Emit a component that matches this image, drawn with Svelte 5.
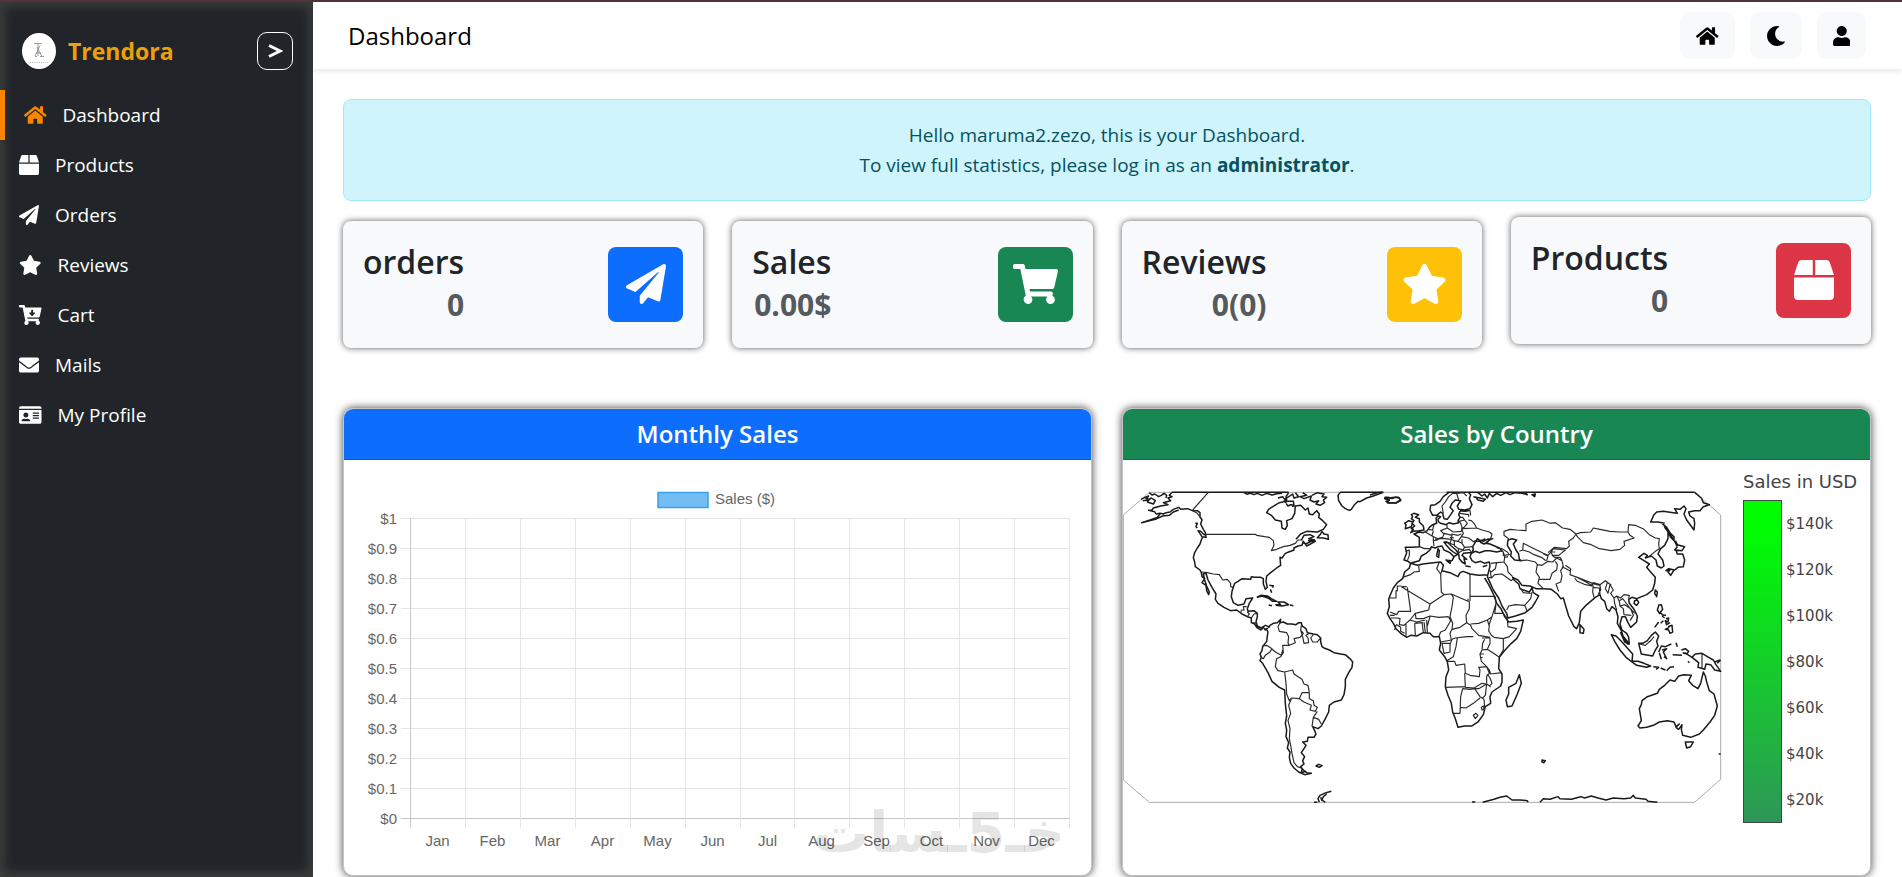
<script lang="ts">
	const cartBody =
		'M504.717 320H211.572l6.545 32h268.418c15.401 0 26.816 14.301 23.403 29.319l-5.517 24.276C523.112 414.668 536 433.828 536 456c0 31.202-25.519 56.444-56.824 55.994-29.823-.429-54.35-24.631-55.155-54.447-.44-16.287 6.085-31.049 16.803-41.548H231.176C241.553 426.165 248 440.326 248 456c0 31.813-26.528 57.431-58.67 55.938-28.54-1.325-51.751-24.385-53.251-52.917-1.158-22.034 10.436-41.455 28.051-51.586L93.883 64H24C10.745 64 0 53.255 0 40V24C0 10.745 10.745 0 24 0h102.529c11.401 0 21.228 8.021 23.513 19.19L159.208 64H551.99c15.401 0 26.816 14.301 23.403 29.319l-47.273 208C525.637 312.246 515.923 320 504.717 320z';

	// [viewBox width, path], every icon is 512 high
	const icons: Record<string, [number, string]> = {
		home: [576, 'M280.37 148.26L96 300.11V464a16 16 0 0 0 16 16l112.06-.29a16 16 0 0 0 15.92-16V368a16 16 0 0 1 16-16h64a16 16 0 0 1 16 16v95.64a16 16 0 0 0 16 16.05L464 480a16 16 0 0 0 16-16V300L295.67 148.26a12.19 12.19 0 0 0-15.3 0zM571.6 251.47L488 182.56V44.05a12 12 0 0 0-12-12h-56a12 12 0 0 0-12 12v72.61L318.47 43a48 48 0 0 0-61 0L4.34 251.47a12 12 0 0 0-1.6 16.9l25.5 31A12 12 0 0 0 45.15 301l235.22-193.74a12.19 12.19 0 0 1 15.3 0L530.9 301a12 12 0 0 0 16.9-1.6l25.5-31a12 12 0 0 0-1.7-16.93z'],
		box: [512, 'M509.5 184.6L458.9 32.8C452.4 13.2 434.1 0 413.4 0H272v192h238.7c-.4-2.5-.4-5-1.2-7.4zM240 0H98.6c-20.7 0-39 13.2-45.5 32.8L2.5 184.6c-.8 2.4-.8 4.9-1.2 7.4H240V0zM0 224v240c0 26.5 21.5 48 48 48h416c26.5 0 48-21.5 48-48V224H0z'],
		plane: [512, 'M476 3.2L12.5 270.6c-18.1 10.4-15.8 35.6 2.2 43.2L121 358.4l287.3-253.2c5.5-4.9 13.3 2.6 8.6 8.3L176 407v80.5c0 23.6 28.5 32.9 42.5 15.8L282 426l124.6 52.2c14.2 6 30.4-2.9 33-18.2l72-432C515 7.8 493.3-6.8 476 3.2z'],
		star: [576, 'M259.3 17.8L194 150.2 47.9 171.5c-26.2 3.8-36.7 36.1-17.7 54.6l105.7 103-25 145.5c-4.5 26.3 23.2 46 46.4 33.7L288 439.6l130.7 68.7c23.2 12.2 50.9-7.4 46.4-33.7l-25-145.5 105.7-103c19-18.5 8.5-50.8-17.7-54.6L382 150.2 316.7 17.8c-11.7-23.6-45.6-23.9-57.4 0z'],
		cart: [576, cartBody],
		cartDown: [576, cartBody + 'M403.029 192H360v-60c0-6.627-5.373-12-12-12h-24c-6.627 0-12 5.373-12 12v60h-43.029c-10.691 0-16.045 12.926-8.485 20.485l67.029 67.029c4.686 4.686 12.284 4.686 16.971 0l67.029-67.029c7.559-7.559 2.205-20.485-8.486-20.485z'],
		mail: [512, 'M502.3 190.8c3.9-3.1 9.7-.2 9.7 4.7V400c0 26.5-21.5 48-48 48H48c-26.5 0-48-21.5-48-48V195.6c0-5 5.7-7.8 9.7-4.7 22.4 17.4 52.1 39.5 154.1 113.6 21.1 15.4 56.7 47.8 92.2 47.6 35.7.3 72-32.8 92.3-47.6 102-74.1 131.6-96.3 154-113.7zM256 320c23.2.4 56.6-29.2 73.4-41.4 132.7-96.3 142.8-104.7 173.4-128.7 5.8-4.5 9.2-11.5 9.2-18.9v-19c0-26.5-21.5-48-48-48H48c-26.5 0-48 21.5-48 48v19c0 7.4 3.4 14.3 9.2 18.9 30.6 23.9 40.7 32.4 173.4 128.7 16.8 12.2 50.2 41.8 73.4 41.4z'],
		idCard: [576, 'M528 32H48C21.5 32 0 53.5 0 80v16h576V80c0-26.5-21.5-48-48-48zM0 432c0 26.5 21.5 48 48 48h480c26.5 0 48-21.5 48-48V128H0v304zm352-232c0-4.4 3.6-8 8-8h144c4.4 0 8 3.6 8 8v16c0 4.4-3.6 8-8 8H360c-4.4 0-8-3.6-8-8v-16zm0 64c0-4.4 3.6-8 8-8h144c4.4 0 8 3.6 8 8v16c0 4.4-3.6 8-8 8H360c-4.4 0-8-3.6-8-8v-16zm0 64c0-4.4 3.6-8 8-8h144c4.4 0 8 3.6 8 8v16c0 4.4-3.6 8-8 8H360c-4.4 0-8-3.6-8-8v-16zM176 192c35.3 0 64 28.7 64 64s-28.7 64-64 64-64-28.7-64-64 28.7-64 64-64zM67.1 396.2C75.5 370.5 99.6 352 128 352h8.2c12.3 5.1 25.7 8 39.8 8s27.6-2.9 39.8-8h8.2c28.4 0 52.5 18.5 60.9 44.2 3.2 9.9-5.2 19.8-15.6 19.8H82.7c-10.4 0-18.8-10-15.6-19.8z'],
		moon: [512, 'M283.211 512c78.962 0 151.079-35.925 198.857-94.792 7.068-8.708-.639-21.43-11.562-19.35-124.203 23.654-238.262-71.576-238.262-196.954 0-72.222 38.662-138.635 101.498-174.394 9.686-5.512 7.25-20.197-3.756-22.23A258.156 258.156 0 0 0 283.211 0c-141.309 0-256 114.511-256 256 0 141.309 114.511 256 256 256z'],
		user: [448, 'M224 256c70.7 0 128-57.3 128-128S294.7 0 224 0 96 57.3 96 128s57.3 128 128 128zm89.6 32h-16.7c-22.2 10.2-46.9 16-72.9 16s-50.6-5.8-72.9-16h-16.7C60.2 288 0 348.2 0 422.4V464c0 26.5 21.5 48 48 48h352c26.5 0 48-21.5 48-48v-41.6c0-74.2-60.2-134.4-134.4-134.4z']
	};

	const links = [
		{ label: 'Dashboard', icon: 'home' },
		{ label: 'Products', icon: 'box' },
		{ label: 'Orders', icon: 'plane' },
		{ label: 'Reviews', icon: 'star' },
		{ label: 'Cart', icon: 'cartDown' },
		{ label: 'Mails', icon: 'mail' },
		{ label: 'My Profile', icon: 'idCard' }
	];

	const stats = [
		{ title: 'orders', value: '0', icon: 'plane', tone: 'blue' },
		{ title: 'Sales', value: '0.00$', icon: 'cart', tone: 'green' },
		{ title: 'Reviews', value: '0(0)', icon: 'star', tone: 'yellow' },
		{ title: 'Products', value: '0', icon: 'box', tone: 'red' }
	];

	const months = ['Jan', 'Feb', 'Mar', 'Apr', 'May', 'Jun', 'Jul', 'Aug', 'Sep', 'Oct', 'Nov', 'Dec'];
	const yTicks = ['$1', '$0.9', '$0.8', '$0.7', '$0.6', '$0.5', '$0.4', '$0.3', '$0.2', '$0.1', '$0'];
	const usdTicks = ['$140k', '$120k', '$100k', '$80k', '$60k', '$40k', '$20k'];

	const left = 66;
	const right = 725;
	const colX = (i: number) => Math.round(left + (i * (right - left)) / 12) + 0.5;
	const rowY = (i: number) => 58.5 + i * 30;

	// map outlines, three units to the pixel
	const westCoast = [
		// Alaska and the Aleutians
		'M118 68L126 75 134 72 146 80 154 76 162 70 170 76 168 84M93 88L105 82 116 78 108 86 118 88 112 96 130 102 136 92 124 84 114 90 98 92M185 68L178 76 186 80 174 84 182 92 160 98 174 104 152 108 130 114 126 120 116 121 134 125 138 132 150 130 160 132 168 128 180 126 190 118 206 112 212 118 232 116 248 122 262 122 270 128 270 140 276 150 272 162 280 178 286 188 288 202 276 200 264 182 272 184 284 196M150 132L142 142 120 150 95 158 136 148 158 138 178 136 190 126 206 120M256 160l6 0 -4 10 4 4',
		// Pacific side down to Panama
		'M278 200L274 210 270 222 262 234 254 248 250 262 254 276 256 290 270 300 274 308 276 320 284 326 276 338 288 346 290 362 296 374 298 366 290 348 284 330 280 312 288 310 294 330 306 352 318 372 316 388 324 400 342 412 362 422 380 420 396 432 412 440 424 444 424 458 434 462 440 472 452 480 460 472 466 480 474 474',
		// Gulf and Atlantic
		'M476 470L466 466 454 474 442 468 438 456 442 440 442 430 432 422 414 424 412 416 418 400 428 384 408 386 402 402 384 406 370 398 364 380 366 364 370 352 374 340 384 334 396 326 422 328 424 320 434 322 452 322 460 326 460 342 466 358 472 352 468 334 470 318 482 308 500 294 512 286 510 262 516 264 526 250 536 246 552 240 552 234 564 228 576 226 580 214 590 228 616 214 604 214 586 222 580 218M574 210L582 196 600 194 612 200 596 206 614 210 594 212M558 208L572 192 590 184 622 186 640 178 650 164 638 152 626 142 628 132 620 122 608 134 598 132 594 114 586 120 572 106 556 108 554 130 546 146 530 152 532 166 526 178 516 174 514 154 496 150 484 136 470 128 476 118 498 104 508 98 518 96 530 90 528 80 536 68M636 184L642 192 654 194 655 208 640 204 622 203 632 192 636 184',
		// Arctic islands
		'M402 68L412 73 420 69 432 74 442 70 456 76 470 70 486 75 500 71 516 70M504 84L518 80 524 88 548 72 552 84 566 80 556 68M524 98L532 94 550 94 552 106 542 104 534 108 528 100M546 110l8 -3M578 68L590 76 570 80 582 86 604 78 600 90 612 96 626 92 618 102 630 106 644 98 640 90 650 82 636 80 642 72 622 68 606 76',
		// Greenland, Iceland, Caribbean
		'M690 68L684 76 686 92 696 108 706 116 718 121 724 118 732 106 744 94 750 95 770 84 790 78 820 67M824 82L836 82 846 86 856 82 868 84 872 92 860 98 836 99 828 94 838 90 822 84M440 382L452 376 472 378 484 386 500 394 488 394 474 384 456 378 442 382M496 404L512 404 504 396 522 396 536 404 516 408 498 406M540 405l10 2M476 405l10 2M478 346l12 1 -3 6M481 358l4 10',
		// South America
		'M476 474L480 466 490 460 502 458 512 448 510 458 520 456 532 462 546 462 558 464 566 458 574 458 576 468 588 476 592 488 610 492 622 494 632 504 632 516 636 530 642 534 658 540 672 548 692 552 706 554 722 568 728 576 726 592 716 608 706 628 706 650 702 674 694 690 672 696 658 706 656 726 646 746 634 768 624 776 608 770 614 782 618 792 612 802 594 802 592 814 578 816 588 826 582 836 574 848 584 860 578 872 582 882 572 890 580 900 590 908 604 910 584 914 566 906 552 894 542 880 538 862 540 846 532 834 536 818 528 800 530 780 526 760 530 738 526 700 524 660 508 652 486 634 474 608 458 580 450 572 454 562 450 552 456 542 458 530 470 514 472 498 474 486 468 474M576 898L574 908 588 904M618 888l8 -5 10 4 -8 5zM664 964L648 968 630 976 624 986 628 997M650 972L640 980 636 990 646 997M632 982l4 10M612 997h10'
	];
	const westBorders = [
		'M295 67L248 120M248 122L262 130 272 144M286 193H436L440 196 464 200 478 202 490 212 492 226 484 242 500 238 520 230 540 226 556 220 564 210 578 210',
		'M274 306L292 308 310 312 328 314 338 330 352 328 362 340 362 350 370 352M392 430L394 420 402 420 400 410 410 410M412 440L418 432 412 426M424 444L432 432 442 430M428 458L442 460M454 474L456 480',
		'M510 458L504 470 508 484 530 488 536 500 534 518 538 528M574 466L572 480 580 490 570 502 552 506 556 518 538 526 518 526 520 548 512 560 500 566 496 590 504 602 524 606 548 600 552 612 576 628 582 642 594 646 598 668M598 668L576 668 568 686 544 684 538 692 530 672 528 640 524 606M568 686L582 696 604 706 600 720 616 724 622 712 612 706 610 692 598 686 598 668M622 724L610 742 606 770M610 742L626 748 634 762',
		'M544 686L536 706 542 730 534 752 540 776 538 806 542 826 546 850 552 878 562 890 574 894M456 528L470 526 486 536 480 546 466 556 460 566 452 560M486 538L500 548 514 556 518 540M572 480L578 500 582 520 596 518 594 504 588 496 598 490M610 494L602 504 608 516 622 516 632 504'
	];
	const eastCoast = [
		// British Isles, Iceland
		'M124 134L132 130 146 134 136 142 148 146 148 156 160 168 162 180 148 182 130 184 122 188 130 178 124 176 134 168 126 160 132 152 124 146 128 140zM116 152L128 156 124 170 106 176 108 164 104 160zM44 84L60 84 72 82 86 82 92 90 78 99 52 98 58 90 44 86',
		// Scandinavia and the Baltic
		'M236 68L220 80 210 94 196 104 182 106 180 120 188 136 200 136 212 126 218 130 222 146 232 148 242 134 250 122 240 112 246 100 256 90 272 92 262 108 266 118 284 120 300 116 306 104 298 86 302 74 296 68M270 122L284 124 296 122M270 124L266 134 270 142 264 152 266 158 250 162 238 158 228 164 212 160 206 156 204 148 212 140 204 138 198 144 200 160 188 164 178 172 172 182 160 188 148 186 132 192 148 202 148 230 128 232 106 232 110 248 102 270 114 274 122 280 134 276 148 272 154 258 168 250 180 240 184 230 196 234 204 230 216 228 222 240 240 248 252 260 246 272 232 274M246 272L252 260 262 254 250 246 240 238 228 224 222 216 234 218 244 228 258 240 266 252 268 266 276 276 286 282 282 266 290 268 276 256 280 250 296 248 304 248M204 236l4 6 -2 20 -6 -4zM228 270L242 272 240 280zM286 288l16 2M338 290l14 -4',
		// Black Sea and Anatolia
		'M304 250L316 244 328 248 346 242 360 242 380 246 396 242 388 234 374 228 360 222 346 220 356 212 368 206 352 208 340 214 328 210 322 206 314 220 308 230 310 240 304 250 300 260 306 272 316 278 332 274 344 280 358 276 360 288 356 304 352 320M312 214L330 214 346 206M330 216L342 222 356 214',
		// Africa
		'M122 280L142 286 158 282 190 278 212 276 220 286 216 302 240 308 264 320 270 308 280 304 300 312 326 316 352 314M122 280L118 294 104 306 98 326 82 338 70 354 62 372 56 388 58 410 52 430 60 446 70 460 78 476 92 490 110 502 122 496 140 498 160 488 180 490 190 500 208 500 212 520 208 540 224 560 232 576 236 600 228 620 226 650 234 676 244 700 248 726 256 746 264 772 284 768 306 768 324 756 340 734 346 710 362 700 360 680 366 666 392 648 396 636 396 612 386 596 388 562 402 544 424 520 440 506 452 484 460 450 440 454 416 456 404 440 394 418 380 400 370 372 356 344 344 324M448 614L454 640 442 672 426 708 412 710 408 690 416 672 416 652 438 640z',
		// Arabia, Gulf, India
		'M352 320L360 338 370 360 386 384 396 408 410 430 414 444 436 438 466 428 486 412 496 396 506 378 490 368 486 354 478 366 460 360 450 356 446 342 432 330 428 322 444 330 456 346 480 348 498 356 520 356 544 358 562 372 572 386 580 384 586 404 596 438 612 470 620 476 628 458 632 424 648 406 662 394 676 382 690 374 694 386 704 394 710 416 718 424 726 410 738 420 744 440 742 460 754 482 760 500 772 522 778 522 776 502 770 490 756 480 750 462 756 440 766 440 774 458 782 472 800 456 802 438 792 418 778 400 776 388 786 382 800 386 830 374 848 360 854 340 856 322 840 304 830 292 838 282 822 272 806 262 822 250 832 256 826 264 844 258 858 270 862 288 874 294 882 288 878 270 864 252 872 236 884 226 894 206 894 184 882 168M630 464L642 478 640 490 630 488z',
		// Pacific Russia
		'M884 160L864 156 842 156 852 134 860 126 880 124 910 128 922 130 914 116 930 118 942 108 948 116 942 132 950 150 972 180 974 160 972 146 960 138 956 126 974 122 990 122 1000 110 1018 104 1000 98 994 84 974 67M876 160L890 172 900 188 912 200 912 210 902 196 884 172M892 182L902 202 914 214 922 230',
		// Japan, Taiwan, Hainan
		'M916 212L922 224 944 230 936 242 918 240 922 252 938 252 944 270 940 290 924 292 914 300 896 296 888 302 900 300 894 306 902 316 912 300M922 230L914 240 926 242M856 360l6 6 -2 14 -6 -10zM794 392l8 -2 4 8 -6 8 -8 -6z',
		// Philippines
		'M864 406L874 404 878 418 870 428 880 436 888 436M866 408L862 420 870 432M876 438l8 6M888 446L896 444 894 456 886 452 890 464 900 458M880 452l-8 8M894 470L906 466 908 486 900 490 896 480 886 478 898 472M866 456L854 472',
		// Indonesia
		'M724 494L738 498 754 514 772 534 788 552 786 576 768 562 750 540 734 514zM752 488L762 502 778 522 764 516zM784 574L804 574 822 580 842 588 830 592 800 586zM806 520L818 520 832 512 844 496 856 486 866 498 860 514 864 528 856 540 848 558 826 554 814 552zM866 546L874 528 886 530 904 522M868 548L874 568M876 540L890 536 880 546 890 566 882 560M850 590l16 2 -8 6M872 594l14 6M890 602L900 592 912 590M918 518l4 12M908 554l28 2M934 540L946 536 956 544 950 552 938 548M954 574l4 4M944 548L966 562 976 552 996 550 1016 562 1030 570 1038 584 1052 604 1034 600 1022 584 1008 582 1004 598 984 592 986 578 966 562M1034 576L1050 570M1042 580l10 -10',
		// Australia
		'M816 692L832 680 862 670 868 658 884 646 900 630 914 634 926 618 942 614 964 616 956 632 968 646 984 656 992 640 1000 606 1006 618 1010 636 1018 662 1032 672 1042 708 1034 736 1020 756 1000 780 988 792 962 802 938 796 934 778 936 764 926 778 918 772 928 762 918 770 912 756 892 752 868 756 850 766 830 772 810 774 804 768 814 752 808 716 814 704zM946 816L970 816 962 830 950 834zM1046 852h6',
		// Caspian and Arctic edge
		'M414 210L426 206 440 210 430 222 438 240 446 252 448 268 454 272 434 270 422 258 424 246 412 226zM310 80L330 84 346 88 340 94 324 90 318 84M324 68L336 78 344 72 352 84 358 70 368 80 380 70 392 76 408 68 420 74 436 68 456 70 472 74 466 68M486 74l10 -2 -2 8zM0 75L22 68 36 67',
		// Antarctica and Kerguelen
		'M338 997L372 988 390 982 410 978 426 990 450 990 472 992 474 997M306 996h10M510 997L520 986 540 988 564 980 570 986 604 988 632 980 644 984 664 978 684 984 708 990 730 984 762 986 782 984 790 976 796 984 828 988 834 994 862 997M516 870l10 2 -4 6 -6 -2z'
	];
	const eastBorders = [
		// Europe
		'M220 130L216 108 226 96 236 80 248 70 260 70 266 90M260 70L280 68 290 78M106 244L118 240 118 256 112 272M148 230L164 236 184 236M166 186L180 194 190 200 190 212 192 228M174 178L188 180 192 162M190 182L186 198 204 206 218 202 222 192 212 182 232 174 230 162M192 212L210 206 224 206 244 208 246 196 222 190M232 174L250 186 274 184 276 172 272 160 268 154M266 154L284 150 278 142 268 142M284 150L292 160 284 170 276 176 320 174 312 160 304 152 294 150M270 130L296 134 296 140M302 136L300 122 292 120M276 178L280 190 274 200 296 204 312 216M320 174L336 180 358 186 366 192 362 206M274 200L264 214 252 212 244 208 240 220M264 214L276 220 276 208M276 220L284 232 310 230M284 232L276 242 264 250M252 212L254 228 266 236 264 250M266 236L280 240M244 192L264 196 274 192M226 214L240 220 254 226M278 242L298 238 304 246M240 202L252 204M196 206L202 212',
		// Caucasus and Middle East
		'M380 234L396 236 412 246 418 254 400 256 400 246 392 242M400 246L404 262 402 276 380 278 362 280M404 262L414 260M402 276L412 290 414 306 428 320M380 278L376 296 360 308 M360 300L364 324 374 314 396 312 424 332 430 326M364 324L356 322M410 420L416 408 436 404 464 406 482 386 486 366M464 406L472 424M452 356L460 368 482 370M452 272L470 270 496 276 502 284 498 306 508 322 504 340 520 356M502 284L516 286 534 274 548 276 560 264 576 272M508 328L540 328 546 310 560 300 562 284 556 274M576 272L580 290 572 302 576 318 572 336 558 342 566 364',
		// Central Asia
		'M416 206L402 196 402 184 420 178 440 180 468 182 468 162 486 154 516 150 540 160 556 158 578 174 600 178 618 192 610 204 596 214 598 228 590 236 552 232 546 242 534 256 520 250 500 240 488 234 460 220 458 240 448 244M458 240L478 246 492 254 514 262 528 272M520 252L534 258 530 272M534 248L548 236 586 240 566 256 548 256 542 246 556 246M546 256L554 262 570 262 576 272',
		// Mongolia, China and Russia
		'M618 192L632 188 662 186 670 174 690 178 720 184 748 186 774 186 780 196 792 204 762 214 764 226 750 238 724 242 688 236 664 224 640 218 622 200 618 192M774 186L776 164 796 166 822 178 838 194 856 204 868 206 866 222 868 236 856 244 844 254 836 260M586 286L602 296 600 314 620 322 648 336 664 346 670 338 690 344 706 332 724 346',
		// South Asia and Indochina
		'M576 290L600 302M614 324L622 334 646 344 666 348 668 340 616 320M670 346L668 366 672 382M668 352L688 354 690 372M666 340L690 346 692 360 684 374M706 332L712 338 706 356 714 370 720 344M720 344L730 360 722 370 732 384 740 378 752 384 762 374 778 376 776 386M732 384L734 400 740 420M740 378L748 394 750 408 764 404 782 416 790 436 780 452M750 408L760 416 762 434 784 436M748 392L758 386 766 396 778 412 794 430M808 522L826 526 844 510 852 500M996 550V594',
		// North and West Africa
		'M98 322L122 314 132 306 148 304 146 286M208 276L200 296 212 312M216 302L212 312 214 366 222 374 180 402M222 374L244 372 294 394 294 386M244 372L250 382 246 410 240 440M300 312V394M300 379H376M94 348H82V362H78V384H56M94 350L180 402 176 420 160 424 136 430 120 450M94 350H110M112 352L122 424 86 424 80 434 60 426M60 436H74M62 444L80 444 90 446 88 464 102 466 108 460 120 450 140 456 166 450M74 470L80 464 92 472 92 484 104 490M78 466L74 480M108 462L108 500M134 460L136 496M156 456L160 488M162 456L166 488M170 450L172 488M136 430L138 446 160 446 180 438 206 442 236 440M134 460L158 458M180 440L172 468',
		// Central and East Africa
		'M236 440L242 452 226 480 212 486 206 500M240 440L248 460 246 478 240 490 244 510 212 516M246 478L270 472 290 458 302 466 306 476 326 496 360 502M246 508L256 504 290 500 310 500M290 458L288 436 298 416 298 394M302 462L326 460 352 450 358 468 356 482 364 496 372 502M376 380L378 400 366 440 352 450M378 404L374 430 400 430 412 446M366 440L360 456 356 468M412 446L414 470 440 476 418 500 400 506 372 502M400 506L400 540 388 560M336 504L360 504 360 520 352 538 336 540 338 520 344 508M352 538L374 552 388 562M336 540L330 552 334 574 350 590 358 600 362 612 396 608M330 552L342 552M330 564L338 562M246 508L240 524 240 546 222 550 216 520 240 520M262 504L258 530 250 560 230 572M230 574L254 574 258 586 284 582 286 610 300 616 328 620 330 600 326 592 350 590',
		// Southern Africa
		'M284 610L286 650 226 652M286 652L312 654 336 640 350 642 362 650M278 656L272 680 270 730 248 730M278 656L300 658 314 656 330 680 342 688M270 712L288 714 310 700 330 684M314 656L326 656 350 642 346 676 338 684M342 688L344 712M350 590L358 610 350 618 350 640M352 612L360 624 366 640 360 646M310 736l8 -6 6 6 -8 10zM334 712l6 -4 2 10 -6 2z'
	];
</script>

{#snippet icon(name: string)}
	<svg class="icon" viewBox="0 0 {icons[name][0]} 512" aria-hidden="true">
		<path fill-rule="evenodd" d={icons[name][1]} />
	</svg>
{/snippet}

<div class="app">
	<aside class="sidebar">
		<div class="brand">
			<svg class="logo" viewBox="0 0 34 36" aria-hidden="true">
				<ellipse cx="17" cy="18" rx="17" ry="18" fill="#fff" />
				<path d="M12 10.500H20M16 10.500V23M13 23.500H15M18 12.500L13 23M15 14L20 23.500M14 20H19M18 23.500H22" fill="none" stroke="#777" stroke-width=".7" />
				<path d="M8 29.500H26" stroke="#bbb" stroke-width="1.200" stroke-dasharray="1.200 1" />
			</svg>
			<span class="brand-name">Trendora</span>
			<button type="button" class="toggle" aria-label="Toggle sidebar">
				<svg viewBox="0 0 16 16" aria-hidden="true"><path d="M2 2.500L13 8 2 13.500" fill="none" stroke="#fff" stroke-width="3" /></svg>
			</button>
		</div>
		<nav>
			{#each links as link, i (link.label)}
				<a href="#{link.icon}" class:active={i === 0}>{@render icon(link.icon)}{link.label}</a>
			{/each}
		</nav>
	</aside>

	<div class="page">
		<header>
			<h1>Dashboard</h1>
			<div class="actions">
				<button type="button" aria-label="Home">{@render icon('home')}</button>
				<button type="button" aria-label="Dark mode">{@render icon('moon')}</button>
				<button type="button" aria-label="Account">{@render icon('user')}</button>
			</div>
		</header>

		<main>
			<div class="alert">
				Hello maruma2.zezo, this is your Dashboard.<br />
				To view full statistics, please log in as an <strong>administrator</strong>.
			</div>

			<section class="stats">
				{#each stats as stat, i (stat.title)}
					<div class="stat" class:raised={i === 3}>
						<div class="figures">
							<h2>{stat.title}</h2>
							<p>{stat.value}</p>
						</div>
						<div class="badge {stat.tone}">{@render icon(stat.icon)}</div>
					</div>
				{/each}
			</section>

			<section class="panels">
				<article class="panel">
					<h3 class="blue">Monthly Sales</h3>
					<svg class="plot chart" viewBox="0 0 747 415">
						<rect x="314" y="32.500" width="50" height="15" fill="#74bdf2" stroke="#36a2eb" stroke-width="1.500" />
						<text x="371" y="44">Sales ($)</text>
						{#each yTicks as tick, i (tick)}
							<line x1="57" x2={right} y1={rowY(i)} y2={rowY(i)} class:base={i === 10} />
							<text x="53" y={rowY(i) + 5} text-anchor="end">{tick}</text>
						{/each}
						{#each { length: 13 } as _, i}
							<line x1={colX(i)} x2={colX(i)} y1="58" y2="368" class:base={i === 0} />
						{/each}
						{#each months as month, i (month)}
							<text x={colX(i) + 27} y="386" text-anchor="middle">{month}</text>
						{/each}
					</svg>
					<span class="watermark" dir="rtl" lang="ar">خـ5ـسات</span>
				</article>

				<article class="panel">
					<h3 class="green">Sales by Country</h3>
					<svg class="plot geo" viewBox="0 0 747 415">
						<defs>
							<linearGradient id="usd" x1="0" y1="0" x2="0" y2="1">
								<stop offset="0" stop-color="#00ff00" />
								<stop offset=".1" stop-color="#00fc04" />
								<stop offset="1" stop-color="#2e9658" />
							</linearGradient>
						</defs>
						<g transform="translate(-13 10) scale(.33333)">
							<path class="frame" d="M118 67H1754L1832 135V928L1754 997H118L40 930V135Z" />
							<path class="coast" d="M185 67H536M690 67H820M1010 67H1754" />
							<path class="coast" d={westCoast.join('')} />
							<path class="border" d={westBorders.join('')} />
						</g>
						<g transform="translate(247 10) scale(.33333)">
							<path class="coast" d={eastCoast.join('')} />
							<path class="border" d={eastBorders.join('')} />
						</g>
						<text class="scale-title" x="620" y="28">Sales in USD</text>
						<rect x="620.500" y="40.500" width="38" height="322" fill="url(#usd)" stroke="#444" />
						{#each usdTicks as tick, i (tick)}
							<text x="663" y={69 + i * 46}>{tick}</text>
						{/each}
					</svg>
				</article>
			</section>
		</main>
	</div>
</div>

<style>
	:global(body) {
		background: #fff;
		font-family: 'Open Sans', 'Noto Sans', sans-serif;
	}

	.app {
		display: grid;
		grid-template-columns: 313px minmax(0, 1fr);
		box-sizing: border-box;
		min-height: 100vh;
		border-top: 2px solid #50343a;
		color: #212529;
	}

	h1, h2, h3, p { margin: 0; }
	button { font: inherit; cursor: pointer; }

	.icon {
		display: block;
		height: 20px;
		fill: currentColor;
	}

	.sidebar {
		background: #212529;
		box-shadow: inset 0 0 10px 5px #3b3b3b;
		color: #fff;
	}
	.brand {
		display: flex;
		align-items: center;
		gap: 12px;
		height: 38px;
		padding: 30px 20px 20px 22px;
	}
	.logo { width: 34px; height: 36px; }
	.brand-name {
		flex: 1;
		font-size: 23px;
		font-weight: 700;
		color: #eca00b;
	}
	.toggle {
		display: flex;
		align-items: center;
		justify-content: center;
		width: 36px;
		height: 38px;
		padding: 0;
		background: none;
		border: 1px solid #fff;
		border-radius: 10px;
	}
	.toggle svg { width: 16px; height: 16px; }

	nav a {
		display: flex;
		align-items: center;
		gap: 16px;
		height: 50px;
		padding-left: 19px;
		font-size: 19px;
		color: #fff;
		text-decoration: none;
	}
	nav a.active { border-left: 5px solid #fa8500; }
	nav a.active .icon { color: #fa8500; }

	header {
		display: flex;
		align-items: center;
		justify-content: space-between;
		height: 67px;
		padding: 0 36px 0 35px;
		box-sizing: border-box;
		box-shadow: 0 2px 5px rgba(0, 0, 0, 0.1);
		color: #000;
	}
	h1 { font-size: 24px; font-weight: 500; }
	.actions { display: flex; gap: 15px; }
	.actions button {
		height: 47px;
		padding: 0 16px;
		background: #f8f9fa;
		border: none;
		border-radius: 10px;
		color: #000;
	}

	main { padding: 30px 31px 0 30px; }

	.alert {
		padding: 20px;
		background: #cff4fc;
		border: 1px solid #9eeaf9;
		border-radius: 8px;
		font-size: 19px;
		line-height: 30px;
		text-align: center;
		color: #055160;
	}

	.stats {
		display: grid;
		grid-template-columns: repeat(4, minmax(0, 1fr));
		gap: 29px;
		margin-top: 20px;
	}
	.stat {
		display: flex;
		align-items: center;
		justify-content: space-between;
		padding: 20px 20px 21px;
		background: #f8f9fb;
		border-radius: 8px;
		box-shadow: 0 0 6px rgba(0, 0, 0, 0.65);
	}
	.stat.raised { transform: translateY(-4px); }
	.figures { text-align: right; }
	h2 {
		font-size: 32px;
		font-weight: 600;
		line-height: 42px;
	}
	.figures p {
		font-size: 30px;
		font-weight: 700;
		line-height: 44px;
		color: #555a5c;
	}
	.badge {
		display: flex;
		align-items: center;
		justify-content: center;
		width: 75px;
		height: 75px;
		border-radius: 8px;
		color: #fff;
	}
	.badge .icon { height: 40px; }
	.blue { background: #0d6efd; }
	.green { background: #198754; }
	.yellow { background: #ffc107; }
	.red { background: #dc3545; }

	.panels {
		display: grid;
		grid-template-columns: repeat(2, minmax(0, 1fr));
		gap: 30px;
		margin-top: 60px;
	}
	.panel {
		position: relative;
		background: #fff;
		border: 1px solid #c4c4c4;
		border-radius: 10px;
		box-shadow: 0 0 8px rgba(0, 0, 0, 0.75);
	}
	h3 {
		border-bottom: 1px solid rgba(0, 0, 0, 0.176);
		border-radius: 9px 9px 0 0;
		font-size: 24px;
		font-weight: 600;
		line-height: 50px;
		text-align: center;
		color: #fff;
	}
	.plot { display: block; width: 100%; }
	.chart text {
		font: 15px 'Liberation Sans', Arial, sans-serif;
		fill: #666;
	}
	.chart line { stroke: #e5e5e5; }
	.chart line.base { stroke: #c8c8c8; }

	.geo text {
		font: 15px 'DejaVu Sans', Verdana, sans-serif;
		fill: #444;
	}
	.geo .scale-title { font-size: 18px; }
	.frame, .coast, .border { fill: none; stroke-linejoin: round; }
	.frame { stroke: #aaa; stroke-width: 3; }
	.coast { stroke: #1a1a1a; stroke-width: 4.5; }
	.border { stroke: #2a2a2a; stroke-width: 3.5; }

	.watermark {
		position: absolute;
		right: 26px;
		bottom: 10px;
		font: 700 56px/64px 'DejaVu Sans', sans-serif;
		color: rgba(0, 0, 0, 0.1);
		pointer-events: none;
	}
</style>
